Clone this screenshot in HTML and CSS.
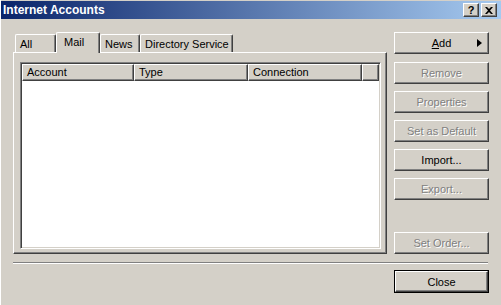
FILE: index.html
```html
<!DOCTYPE html>
<html lang="en">
<head>
    <meta charset="UTF-8">
    <title>Internet Accounts</title>
    <link rel="stylesheet" href="styles.css">
</head>
<body>
    <div class="window">
        <div class="titlebar">
            <span class="title">Internet Accounts</span>
            <div class="caption-buttons">
                <span class="cap-btn">?</span>
                <span class="cap-btn close-x">
                    <svg width="8" height="7" viewBox="0 0 8 7"><path d="M0 0h2l2 2 2-2h2L5 3.5 8 7H6L4 5 2 7H0l3-3.5z" fill="#000"/></svg>
                </span>
            </div>
        </div>

        <div class="content">
            <div class="main">
                <div class="left">
                    <div class="tabs">
                        <div class="tab tab-all">All</div>
                        <div class="tab tab-mail active">Mail</div>
                        <div class="tab tab-news">News</div>
                        <div class="tab tab-dir">Directory Service</div>
                    </div>
                    <div class="panel">
                        <div class="list">
                            <div class="list-header">
                                <div class="col col-account">Account</div>
                                <div class="col col-type">Type</div>
                                <div class="col col-conn">Connection</div>
                                <div class="col col-fill"></div>
                            </div>
                        </div>
                    </div>
                </div>

                <!-- Right side buttons -->
                <div class="buttons">
                    <div class="btn btn-add"><span><u>A</u>dd</span><span class="arrow"></span></div>
                    <div class="btn disabled">Remove</div>
                    <div class="btn disabled">Properties</div>
                    <div class="btn disabled">Set as Default</div>
                    <div class="btn">Import...</div>
                    <div class="btn disabled">Export...</div>
                    <div class="btn disabled btn-order">Set Order...</div>
                </div>
            </div>

            <div class="separator"></div>

            <div class="footer">
                <div class="default-ring"><div class="btn">Close</div></div>
            </div>
        </div>
    </div>
</body>
</html>
```

FILE: styles.css
```css
body {
    margin: 0;
    padding: 0;
    background-color: #d4d0c8;
    font-family: "Liberation Sans", Arial, sans-serif;
    font-size: 11px;
    color: #000;
    overflow: hidden;
}
.window {
    height: 305px;
    border-left: 1px solid #fff;
    padding-top: 1px;
    box-sizing: border-box;
}
.titlebar {
    height: 18px;
    display: flex;
    align-items: center;
    justify-content: space-between;
    background: linear-gradient(to right, #0a246a, #a6caf0);
    padding: 0 4px 0 2px;
}
.title {
    color: white;
    font-weight: bold;
    font-size: 12px;
}
.caption-buttons {
    display: flex;
    gap: 2px;
}
.cap-btn {
    width: 16px;
    height: 14px;
    box-sizing: border-box;
    background: #d4d0c8;
    border: 1px solid;
    border-color: #fff #404040 #404040 #fff;
    box-shadow: inset -1px -1px #808080;
    display: flex;
    align-items: center;
    justify-content: center;
    font-weight: bold;
    font-size: 11px;
    line-height: 1;
}
.content {
    padding: 13px 12px 0 12px;
}
.main {
    display: flex;
    gap: 7px;
}
.left {
    width: 374px;
}
.tabs {
    height: 20px;
    display: flex;
    align-items: flex-end;
    padding-left: 2px;
}
.tab {
    height: 18px;
    box-sizing: border-box;
    border: 1px solid;
    border-color: #fff #404040 transparent #fff;
    border-bottom: none;
    border-radius: 2px 2px 0 0;
    box-shadow: inset -1px 0 #808080;
    padding: 3px 0 0 4px;
}
.tab-all { width: 41px; }
.tab-mail { width: 44px; }
.tab-news { width: 40px; }
.tab-dir { width: 93px; }
.tab.active {
    height: 21px;
    margin-bottom: -1px;
    background: #d4d0c8;
    position: relative;
    z-index: 1;
    padding: 3px 0 0 7px;
}
.panel {
    height: 202px;
    box-sizing: border-box;
    border: 1px solid;
    border-color: #fff #404040 #404040 #fff;
    box-shadow: inset -1px -1px #808080;
    padding: 9px 5px 4px 6px;
}
.list {
    height: 187px;
    box-sizing: border-box;
    background: white;
    border: 1px solid;
    border-color: #808080 #fff #fff #808080;
    box-shadow: inset 1px 1px #404040, inset -1px -1px #d4d0c8;
    padding: 1px;
}
.list-header {
    display: flex;
    height: 17px;
}
.col {
    box-sizing: border-box;
    background: #d4d0c8;
    border: 1px solid;
    border-color: #fff #404040 #404040 #fff;
    box-shadow: inset -1px -1px #808080;
    padding: 1px 0 0 4px;
}
.col-account { width: 112px; }
.col-type { width: 114px; }
.col-conn { width: 114px; }
.col-fill { flex: 1; }
.buttons {
    width: 95px;
    display: flex;
    flex-direction: column;
    gap: 7px;
    height: 222px;
}
.btn {
    height: 22px;
    box-sizing: border-box;
    border: 1px solid;
    border-color: #fff #404040 #404040 #fff;
    box-shadow: inset -1px -1px #808080;
    display: flex;
    align-items: center;
    justify-content: center;
}
.btn.disabled {
    color: #808080;
    text-shadow: 1px 1px #fff;
}
.btn-add {
    margin-bottom: 1px;
    position: relative;
}
.btn-add .arrow {
    position: absolute;
    right: 6px;
    top: 6px;
    width: 0;
    height: 0;
    border-top: 4.5px solid transparent;
    border-bottom: 4.5px solid transparent;
    border-left: 5px solid #000;
}
.btn-order {
    margin-top: auto;
}
.separator {
    margin-top: 8px;
    width: 475px;
    height: 2px;
    border-top: 1px solid #808080;
    border-bottom: 1px solid #fff;
    box-sizing: border-box;
}
.footer {
    display: flex;
    justify-content: flex-end;
    margin-top: 6px;
}
.default-ring {
    width: 95px;
    border: 1px solid #000;
    box-sizing: border-box;
}
.default-ring .btn {
    height: 21px;
}
```
